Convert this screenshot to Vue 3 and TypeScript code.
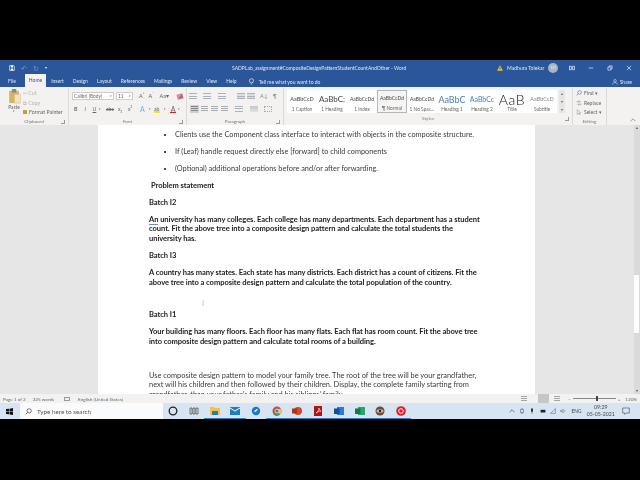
<template>
  <div class="screen">
    <header class="titlebar">
      <div class="quick">
        <svg class="qa save" viewBox="0 0 10 10"><path d="M1 1h7l1 1v7H1z" fill="none" stroke="#fff" /><path d="M3 1h4v3H3zM3 6h4v3H3z" fill="#fff" /></svg>
        <span class="qa dim">↶</span>
        <span class="qa dim">↻</span>
        <span class="qa caret">▾</span>
      </div>
      <div class="doc-title">SADPLab_assignment#CompositeDesignPatternStudentCountAndOther  -  Word</div>
      <div class="account">
        <svg class="warn" viewBox="0 0 10 10"><path d="M5 .5 9.800 9.500H.2z" fill="#f3c13a" /><path d="M4.500 3.500h1v3.200h-1zM4.500 7.300h1v1h-1z" fill="#333" /></svg>
        <span class="user">Madhura Tolekar</span>
        <span class="avatar">MT</span>
      </div>
      <div class="win-btns">
        <svg viewBox="0 0 10 10"><rect x="1" y="2" width="8" height="6" fill="none" stroke="#fff" /><path d="M3 4h4v2H3z" fill="#fff" /></svg>
        <svg viewBox="0 0 10 10"><path d="M1 5h8" stroke="#fff" /></svg>
        <svg viewBox="0 0 10 10"><path d="M1.500 3.500h5v5h-5zM3.500 3.500v-2h5v5h-2" fill="none" stroke="#fff" /></svg>
        <svg viewBox="0 0 10 10"><path d="m1.500 1.500 7 7m0-7-7 7" stroke="#fff" /></svg>
      </div>
    </header>

    <nav class="tabs">
      <span v-for="tab in tabs" :key="tab" class="tab" :class="{ active: tab === 'Home' }">{{ tab }}</span>
      <span class="tell">
        <svg viewBox="0 0 10 10"><circle cx="5" cy="4" r="3" fill="none" stroke="#fff" stroke-width=".9" /><path d="M4 8.500h2" stroke="#fff" /></svg>
        Tell me what you want to do
      </span>
      <span class="share">
        <svg viewBox="0 0 10 10"><circle cx="5" cy="3" r="2.200" fill="none" stroke="#fff" stroke-width=".8" /><path d="M1 9.500c0-5 8-5 8 0" fill="none" stroke="#fff" stroke-width=".8" /></svg>
        Share
      </span>
    </nav>

    <section class="ribbon">
      <div class="group clipboard">
        <div class="group-body clip-body">
          <div class="paste">
            <svg viewBox="0 0 14 17"><rect x="1" y="2" width="11" height="14" fill="#d9b25f" /><rect x="4" y="0" width="5" height="4" fill="#8a8a8a" /><path d="M7 6h7v10H7z" fill="#f4e3b5" stroke="#bbb" stroke-width=".5" /></svg>
            <span>Paste</span>
            <span class="tiny-caret">▾</span>
          </div>
          <div class="clip-list">
            <span class="off">✂ Cut</span>
            <span class="off">⧉ Copy</span>
            <span><i class="brush"></i>Format Painter</span>
          </div>
        </div>
        <div class="group-label">Clipboard<i class="launcher"></i></div>
      </div>

      <div class="group font">
        <div class="group-body font-body">
          <div class="tool-row">
            <span class="select family">Calibri (Body)<em>▾</em></span>
            <span class="select size">11<em>▾</em></span>
            <span class="tool big">A<sup>^</sup></span>
            <span class="tool small">A<sup>ˇ</sup></span>
            <span class="tool aa">Aa▾</span>
            <span class="tool eraser"></span>
          </div>
          <div class="marks">
            <b>B</b><i>I</i><u>U</u><em>▾</em><s>abc</s><span>x<sub>2</sub></span><span>x<sup>2</sup></span>
            <span class="effect">A</span><em>▾</em>
            <span class="highlight">ab</span><em>▾</em>
            <span class="fontcolor">A</span><em>▾</em>
          </div>
        </div>
        <div class="group-label">Font<i class="launcher"></i></div>
      </div>

      <div class="group paragraph">
        <div class="group-body para-body">
          <div class="para-row top">
            <span v-for="n in 3" :key="n" class="para-icon list"></span>
            <span class="para-icon indent"></span>
            <span class="para-icon indent"></span>
            <span class="para-glyph">A↓</span>
            <span class="para-glyph">¶</span>
          </div>
          <div class="para-row bottom">
            <span class="align on"></span>
            <span class="align"></span>
            <span class="align"></span>
            <span class="align"></span>
            <span class="para-icon spacing"></span>
            <span class="para-icon shade"></span>
            <span class="para-icon borders"></span>
          </div>
        </div>
        <div class="group-label">Paragraph<i class="launcher"></i></div>
      </div>

      <div class="group styles">
        <div class="group-body gallery-wrap">
          <div class="gallery">
            <div v-for="s in styleItems" :key="s.label" class="style-item" :class="{ selected: s.label === '¶ Normal' }">
              <span class="sample" :class="s.cls">{{ s.sample }}</span>
              <span class="style-name">{{ s.label }}</span>
            </div>
          </div>
          <div class="gallery-scroll"><span>▴</span><span>▾</span><span>▾</span></div>
        </div>
        <div class="group-label">Styles<i class="launcher"></i></div>
      </div>

      <div class="group editing">
        <div class="group-body edit-body">
          <span><svg viewBox="0 0 10 10"><circle cx="6" cy="4" r="3" fill="none" stroke="#4a6fa5" /><path d="m4 6-3 3" stroke="#4a6fa5" /></svg>Find ▾</span>
          <span><svg viewBox="0 0 10 10"><path d="M1 3h6l-2-2M9 7H3l2 2" fill="none" stroke="#777" /></svg>Replace</span>
          <span><svg viewBox="0 0 10 10"><path d="M2 1v8l2-2 1.500 2.500L7 9 5.500 6.500H8z" fill="none" stroke="#888" stroke-width=".8" /></svg>Select ▾</span>
        </div>
        <div class="group-label">Editing</div>
      </div>
      <svg class="collapse" viewBox="0 0 10 6"><path d="m1 5 4-4 4 4" fill="none" stroke="#666" /></svg>
    </section>

    <main class="workspace">
      <div class="margin-left"></div>
      <article class="page">
        <ul class="bullets">
          <li v-for="b in bullets" :key="b">{{ b }}</li>
        </ul>
        <p class="bold statement">Problem statement</p>
        <p class="bold">Batch I2</p>
        <p class="bold"><span class="squiggle">An</span> university has many colleges. Each college has many departments. Each department has a student<br />count. Fit the above tree into a composite design pattern and calculate the total students the<br />university has.</p>
        <p class="bold">Batch I3</p>
        <p class="bold">A country has many states. Each state has many districts. Each district has a count of citizens. Fit the<br />above tree into a composite design pattern and calculate the total population of the country.</p>
        <p class="bold after-country">Batch I1</p>
        <p class="bold">Your building has many floors. Each floor has many flats. Each flat has room count. Fit the above tree<br />into composite design pattern and calculate total rooms of a building.</p>
        <p class="family-task">Use composite design pattern to model your family tree. The root of the tree will be your grandfather,<br />next will his children and then followed by their children. Display, the complete family starting from<br />grandfather, than your father's family and his siblings' family.</p>
        <span class="ibeam">I</span>
      </article>
      <div class="margin-right">
        <div class="scrollbar">
          <span>▴</span>
          <i class="thumb"></i>
          <span>▾</span>
        </div>
      </div>
    </main>

    <footer class="statusbar">
      <span>Page 1 of 2</span>
      <span>325 words</span>
      <i class="proof"></i>
      <span>English (United States)</span>
      <div class="status-right">
        <i class="view"></i>
        <i class="view on"></i>
        <i class="view"></i>
        <span class="minus">−</span>
        <div class="zoom-track"><i></i></div>
        <span class="plus">+</span>
        <span class="percent">120%</span>
      </div>
    </footer>

    <div class="taskbar">
      <svg class="start" viewBox="0 0 10 10"><path d="M0 1.500 4.500 1v3.700H0zM5.200.9 10 0v4.700H5.200zM0 5.300h4.500V9L0 8.500zM5.200 5.300H10V10l-4.800-.8z" fill="#111" /></svg>
      <div class="search">
        <svg viewBox="0 0 10 10"><circle cx="6" cy="4" r="3" fill="none" stroke="#333" stroke-width=".9" /><path d="M3.800 6.200 1 9" stroke="#333" /></svg>
        Type here to search
      </div>
      <div class="apps">
        <span class="app"><svg viewBox="0 0 10 10"><circle cx="5" cy="5" r="3.800" fill="none" stroke="#222" stroke-width="1.300" /></svg></span>
        <span class="app"><svg viewBox="0 0 10 10"><path d="M1 2h2v6H1zM4 2h2v6H4zM7 2h2v6H7z" fill="none" stroke="#555" stroke-width=".8" /></svg></span>
        <span class="app run"><svg viewBox="0 0 10 10"><path d="M0 1h4l1 1h5v7H0z" fill="#f1c14c" /><path d="M2 5h6v4H2z" fill="#2a78c2" /></svg></span>
        <span class="app run"><svg viewBox="0 0 10 10"><rect y="1" width="10" height="8" fill="#1d7fc4" /><path d="m0 2 5 3 5-3" fill="none" stroke="#fff" /></svg></span>
        <span class="app"><svg viewBox="0 0 10 10"><circle cx="5" cy="5" r="4.200" fill="#1a78d0" /><path d="M3 6c1-2 2-3 4-3-1 2-2 3-4 3z" fill="#fff" /></svg></span>
        <span class="app run"><svg viewBox="0 0 10 10"><circle cx="5" cy="5" r="4.500" fill="#d8473c" /><path d="M5 5 1 8a4.500 4.500 0 0 0 7 .5z" fill="#3fa14e" /><path d="M5 5 8 8.500A4.500 4.500 0 0 0 9 3H5z" fill="#f3c13a" /><circle cx="5" cy="5" r="2" fill="#3d7fe0" stroke="#fff" stroke-width=".6" /></svg></span>
        <span class="app run"><svg viewBox="0 0 10 10"><circle cx="6" cy="5" r="4" fill="#d24726" /><rect x="0" y="2.500" width="5" height="5" fill="#a8341b" /></svg></span>
        <span class="app run"><svg viewBox="0 0 10 10"><rect x="1" width="8" height="10" fill="#b51212" /><path d="M3 7c2-1 3-3 3-5 0 2 1 3 2 3-2 0-3 1-5 2z" fill="none" stroke="#fff" stroke-width=".6" /></svg></span>
        <span class="app run"><svg viewBox="0 0 10 10"><rect x="3" y="1" width="7" height="8" fill="#2b7cd3" /><rect y="2.500" width="5.500" height="5.500" fill="#174e9c" /></svg></span>
        <span class="app run"><svg viewBox="0 0 10 10"><rect x="3" y="1" width="7" height="8" fill="#2ea36a" /><rect y="2.500" width="5.500" height="5.500" fill="#107c41" /></svg></span>
        <span class="app run"><svg viewBox="0 0 10 10"><circle cx="5" cy="5" r="4.500" fill="#5d5147" /><ellipse cx="5" cy="5" rx="3.500" ry="1.800" fill="#d9b98e" /><circle cx="5" cy="5" r="1.200" fill="#222" /></svg></span>
        <span class="app run"><svg viewBox="0 0 10 10"><circle cx="5" cy="5" r="4.800" fill="#e0202a" /><circle cx="5" cy="5" r="2.300" fill="none" stroke="#fff" stroke-width=".9" /></svg></span>
      </div>
      <div class="tray">
        <svg viewBox="0 0 10 10"><path d="m1 7 4-4 4 4" fill="none" stroke="#333" /></svg>
        <svg viewBox="0 0 10 10"><rect x="3" y="2" width="4" height="6" fill="none" stroke="#444" stroke-width=".8" /><path d="M5 0v2M5 8v2" stroke="#444" /></svg>
        <svg viewBox="0 0 10 10"><rect x="3.500" y=".5" width="3" height="6" rx="1.500" fill="#222" /><path d="M5 7v2.500" stroke="#222" /></svg>
        <svg viewBox="0 0 10 10"><rect x="1" y="3" width="8" height="4.500" fill="#222" /></svg>
        <svg viewBox="0 0 10 10"><path d="M1 9 9 1v8z" fill="none" stroke="#555" stroke-width=".8" /></svg>
        <svg viewBox="0 0 10 10"><path d="M1 4h2l2-2v6L3 6H1zM7 3c1 1 1 3 0 4" fill="none" stroke="#555" stroke-width=".8" /></svg>
        <span class="lang">ENG</span>
        <span class="clock">09:29<br />05-05-2021</span>
        <svg class="notif" viewBox="0 0 12 12"><path d="M1 1.500h10v7.500H6l-2 2V9H1z" fill="none" stroke="#333" stroke-width=".8" /></svg>
      </div>
    </div>
  </div>
</template>

<script setup lang="ts">
interface StyleItem {
  sample: string
  label: string
  cls: string
}

const tabs: string[] = ['File', 'Home', 'Insert', 'Design', 'Layout', 'References', 'Mailings', 'Review', 'View', 'Help']

const styleItems: StyleItem[] = [
  { sample: 'AaBbCcD', label: '1 Caption', cls: 'caption' },
  { sample: 'AaBbC:', label: '1 Heading', cls: 'heading' },
  { sample: 'AaBbCcDd', label: '1 Index', cls: '' },
  { sample: 'AaBbCcDd', label: '¶ Normal', cls: '' },
  { sample: 'AaBbCcDd', label: '1 No Spac...', cls: '' },
  { sample: 'AaBbC', label: 'Heading 1', cls: 'h1' },
  { sample: 'AaBbCc', label: 'Heading 2', cls: 'h2' },
  { sample: 'AaB', label: 'Title', cls: 'title' },
  { sample: 'AaBbCcD', label: 'Subtitle', cls: 'subtitle' }
]

const bullets: string[] = [
  'Clients use the Component class interface to interact with objects in the composite structure.',
  'If (Leaf) handle request directly else [forward] to child components',
  '(Optional) additional operations before and/or after forwarding.'
]
</script>

<style>
html,
body {
  margin: 0;
  background: #000;
}
</style>

<style scoped>
.screen {
  width: 640px;
  height: 480px;
  padding: 60px 0;
  box-sizing: border-box;
  background: #000;
  display: flex;
  flex-direction: column;
  overflow: hidden;
  font-family: Lato, "Liberation Sans", sans-serif;
  color: #333;
  filter: blur(0.3px);
}

.titlebar {
  height: 16px;
  flex: none;
  background: #2b579a;
  color: #dfe7f3;
  display: flex;
  align-items: center;
  position: relative;
}

.quick {
  display: flex;
  align-items: center;
  gap: 6px;
  padding-left: 9px;
  width: 232px;
  box-sizing: border-box;
}

.qa {
  font-size: 7px;
  line-height: 8px;
}

.qa.save {
  width: 6px;
  height: 6px;
}

.qa.dim {
  color: #7f9cc6;
}

.qa.caret {
  font-size: 4px;
}

.doc-title {
  width: 265px;
  white-space: pre;
  font-size: 5px;
}

.account {
  display: flex;
  align-items: center;
  gap: 4px;
  font-size: 5.100px;
}

.warn {
  width: 6px;
  height: 6px;
}

.avatar {
  width: 10px;
  height: 10px;
  border-radius: 50%;
  background: #a9b4c4;
  font-size: 3.500px;
  display: flex;
  align-items: center;
  justify-content: center;
  color: #eee;
}

.win-btns {
  display: flex;
  gap: 13px;
  margin-left: 11px;
}

.win-btns svg {
  width: 6px;
  height: 6px;
}

.tabs {
  height: 11px;
  flex: none;
  background: #2b579a;
  color: #dfe7f3;
  display: flex;
  align-items: flex-end;
  font-size: 5px;
  padding-left: 8px;
  position: relative;
}

.tab {
  height: 11px;
  line-height: 10px;
  margin-right: 9px;
}

.tab.active {
  background: #f3f2f1;
  color: #2b579a;
  height: 13px;
  line-height: 13px;
  padding: 0 4px;
  margin-right: 5px;
}

.tell {
  display: flex;
  align-items: center;
  gap: 4px;
  height: 11px;
  margin-left: 2px;
}

.tell svg {
  width: 7px;
  height: 7px;
}

.share {
  margin-left: auto;
  margin-right: 8px;
  display: flex;
  align-items: center;
  gap: 2px;
  height: 11px;
}

.share svg {
  width: 6px;
  height: 6px;
}

.ribbon {
  height: 38px;
  flex: none;
  background: #f3f2f1;
  display: flex;
  font-size: 5.400px;
  color: #666;
  position: relative;
}

.group {
  box-sizing: border-box;
  border-right: 1px solid #dcdad8;
  display: flex;
  flex-direction: column;
  margin-top: 1px;
}

.group-body {
  flex: 1;
  min-height: 0;
}

.group-label {
  height: 8px;
  line-height: 8px;
  font-size: 4.600px;
  color: #777;
  text-align: center;
  position: relative;
}

.launcher {
  position: absolute;
  right: 3px;
  top: 3px;
  width: 3px;
  height: 3px;
  border-right: 1px solid #999;
  border-bottom: 1px solid #999;
}

.clipboard {
  width: 69px;
}

.clip-body {
  display: flex;
  padding: 1px 0 0 6px;
}

.paste {
  width: 16px;
  display: flex;
  flex-direction: column;
  align-items: center;
  font-size: 4.800px;
  line-height: 6px;
}

.paste svg {
  width: 13px;
  height: 15px;
}

.tiny-caret {
  font-size: 3px;
  line-height: 3px;
}

.clip-list {
  display: flex;
  flex-direction: column;
  gap: 1.500px;
  padding-left: 1px;
  line-height: 8px;
  font-size: 5.200px;
  white-space: nowrap;
}

.clip-list .off {
  color: #b4b2b0;
}

.brush {
  display: inline-block;
  width: 4px;
  height: 4px;
  margin-right: 2px;
  background: #c89b3c;
}

.font {
  width: 118px;
}

.font-body {
  padding: 4px 0 0 3px;
  display: flex;
  flex-direction: column;
  gap: 5px;
}

.tool-row {
  display: flex;
  align-items: center;
  height: 8px;
  gap: 4px;
}

.select {
  height: 8px;
  line-height: 7px;
  box-sizing: border-box;
  border: 1px solid #d0cecc;
  background: #fff;
  padding-left: 1px;
  display: flex;
  justify-content: space-between;
  font-size: 4.800px;
  white-space: nowrap;
}

.select em {
  font-style: normal;
  font-size: 3px;
  padding-right: 1px;
}

.family {
  width: 42px;
  margin-right: -2px;
}

.size {
  width: 17px;
}

.tool {
  font-size: 5.500px;
}

.big {
  margin-left: 2px;
}

.aa {
  margin-left: 2px;
}

.eraser {
  width: 6px;
  height: 5px;
  margin-left: 4px;
  background: linear-gradient(135deg, #d98aa0 50%, #b9667e 50%);
  transform: rotate(-15deg);
}

.marks {
  display: grid;
  grid-template-columns: 10.500px 8px 6.500px 7px 12px 10px 12px 9px 5px 10px 6px 8px 6px;
  align-items: center;
  height: 8px;
  padding-left: 2px;
  font-size: 5.200px;
  line-height: 8px;
}

.marks em {
  font-style: normal;
  font-size: 3px;
}

.marks sub,
.marks sup,
.big sup,
.small sup {
  font-size: 3px;
  line-height: 0;
}

.effect {
  color: #7ea6d8;
  font-size: 7px;
}

.highlight {
  background: linear-gradient(#f3f2f1 70%, #f4e421 70%);
  width: 6px;
  overflow: hidden;
}

.fontcolor {
  font-size: 7px;
  line-height: 6px;
  width: 6px;
  text-align: center;
  border-bottom: 1.500px solid #d3222a;
}

.paragraph {
  width: 97px;
}

.para-body {
  padding-top: 4px;
  display: flex;
  flex-direction: column;
  gap: 5px;
}

.para-row {
  display: grid;
  align-items: center;
  height: 8px;
  font-size: 5.500px;
  color: #888;
}

.para-row.top {
  padding-left: 2px;
  grid-template-columns: 14px 15px 19px 10px 13px 13px 6px;
}

.para-row.bottom {
  padding-left: 4px;
  grid-template-columns: 10px 10px 10px 14px 15px 14px 8px;
}

.para-icon {
  width: 8px;
  height: 6px;
  background: repeating-linear-gradient(#a9b2be 0 1px, transparent 1px 2.500px);
}

.para-icon.list {
  width: 8px;
}

.para-icon.indent {
  background-color: #d9dde4;
}

.para-icon.shade {
  background: linear-gradient(#c5c5c5, #e2e2e2);
}

.para-icon.borders {
  background: none;
  border: 1px dotted #aaa;
  box-sizing: border-box;
}

.para-glyph {
  white-space: nowrap;
  line-height: 8px;
}

.align {
  width: 7px;
  height: 6px;
  background: repeating-linear-gradient(#a8adb4 0 1px, transparent 1px 2px);
}

.align.on {
  background: repeating-linear-gradient(#85898f 0 1px, #d2d0ce 1px 2px);
  outline: 1.500px solid #d2d0ce;
}

.styles {
  width: 289px;
}

.gallery-wrap {
  display: flex;
  padding: 2px 0 0 3px;
  height: 26px;
  flex: none;
  box-sizing: border-box;
}

.gallery {
  background: #fff;
  display: grid;
  grid-template-columns: repeat(9, 30px);
  width: 270px;
  height: 23px;
}

.style-item {
  box-sizing: border-box;
  display: flex;
  flex-direction: column;
  align-items: center;
  justify-content: flex-end;
  overflow: hidden;
  white-space: nowrap;
  height: 23px;
}

.style-item.selected {
  border: 1px solid #b8b6b4;
  background: #f6f5f4;
}

.sample {
  font-size: 5px;
  color: #444;
  line-height: 11px;
}

.sample.caption,
.sample.subtitle {
  font-size: 5.500px;
}

.sample.subtitle {
  color: #888;
}

.sample.heading {
  font-size: 8px;
}

.sample.h1 {
  font-size: 9px;
  color: #4c7fb8;
}

.sample.h2 {
  font-size: 7px;
  color: #4c7fb8;
}

.sample.title {
  font-size: 14px;
  font-weight: 300;
  letter-spacing: 0.6px;
  color: #111;
}

.style-name {
  font-size: 4.800px;
  line-height: 8px;
  color: #666;
}

.gallery-scroll {
  width: 6px;
  height: 23px;
  margin-left: 2px;
  display: flex;
  flex-direction: column;
  justify-content: space-between;
  align-items: center;
  background: #e6e5e4;
  font-size: 4px;
  line-height: 7px;
}

.editing {
  width: 34px;
}

.edit-body {
  display: flex;
  flex-direction: column;
  gap: 1.500px;
  padding: 1px 0 0 3px;
  font-size: 5px;
  line-height: 8px;
  white-space: nowrap;
}

.edit-body svg {
  width: 6px;
  height: 6px;
  margin-right: 2px;
  vertical-align: -1px;
}

.collapse {
  position: absolute;
  right: 4px;
  bottom: 3px;
  width: 6px;
  height: 4px;
}

.workspace {
  height: 269px;
  flex: none;
  display: flex;
  background: #e6e6e6;
  overflow: hidden;
}

.margin-left {
  width: 98px;
  flex: none;
}

.page {
  width: 437px;
  flex: none;
  box-sizing: border-box;
  background: #fff;
  padding: 5.200px 0 0 51px;
  font-size: 7.330px;
  line-height: 9.700px;
  color: #3a3a3a;
  position: relative;
}

.bullets {
  margin: 0 0 7.200px;
  padding: 0 0 0 26px;
}

.bullets li {
  margin-bottom: 7.200px;
  white-space: nowrap;
}

.bullets li::marker {
  font-size: 7px;
  color: #111;
}

.page p {
  margin: 0 0 7.200px;
  white-space: nowrap;
}

.page p.bold {
  font-size: 7.550px;
  font-weight: 700;
  color: #222;
  letter-spacing: -0.06px;
}

.page p.statement {
  padding-left: 2px;
}

.page p.after-country {
  margin-top: 22.700px;
}

.page p.family-task {
  margin-top: 24.500px;
  font-size: 7.420px;
}

.squiggle {
  border-bottom: 1px solid #6c8ebf;
}

.ibeam {
  position: absolute;
  left: 104px;
  top: 174px;
  color: #888;
  font-weight: 300;
  font-size: 8px;
}

.margin-right {
  flex: 1;
  display: flex;
  justify-content: flex-end;
}

.scrollbar {
  width: 6px;
  background: #dadada;
  display: flex;
  flex-direction: column;
  align-items: center;
  font-size: 4px;
  line-height: 6px;
  color: #555;
  position: relative;
}

.thumb {
  position: absolute;
  left: 0;
  top: 150px;
  width: 5px;
  height: 58px;
  background: #fff;
}

.scrollbar span:last-child {
  margin-top: auto;
}

.statusbar {
  height: 9px;
  flex: none;
  background: #f3f2f1;
  display: flex;
  align-items: center;
  gap: 7px;
  padding: 0 3px;
  font-size: 4.600px;
  color: #666;
}

.proof {
  width: 6px;
  height: 4px;
  border: 1px solid #999;
  box-sizing: border-box;
  margin: 0 1px 0 3px;
}

.status-right {
  margin-left: auto;
  display: flex;
  align-items: center;
}

.view {
  width: 6px;
  height: 5px;
  background: repeating-linear-gradient(#a8a6a4 0 1px, transparent 1px 2px);
}

.view:first-child {
  margin-right: 11px;
}

.view.on {
  width: 11px;
  height: 9px;
  margin-right: 5px;
  background: #c8c6c4;
}

.minus {
  margin-left: 8px;
}

.zoom-track {
  width: 43px;
  height: 1px;
  background: #888;
  position: relative;
  margin-left: 2px;
}

.zoom-track i {
  position: absolute;
  left: 23px;
  top: -2px;
  width: 2px;
  height: 5px;
  background: #444;
}

.plus {
  margin-left: 2px;
}

.percent {
  margin-left: 5px;
}

.taskbar {
  height: 16px;
  flex: none;
  background: #d7e4f2;
  display: flex;
  align-items: center;
  position: relative;
}

.start {
  width: 7px;
  height: 7px;
  margin: 0 7px 0 6px;
}

.search {
  width: 143px;
  height: 16px;
  flex: none;
  box-sizing: border-box;
  background: #fafbfc;
  display: flex;
  align-items: center;
  gap: 5px;
  padding-left: 5px;
  font-size: 6.300px;
  color: #555;
}

.search svg {
  width: 7px;
  height: 7px;
}

.apps {
  display: flex;
}

.app {
  width: 20.700px;
  height: 16px;
  box-sizing: border-box;
  display: flex;
  align-items: center;
  justify-content: center;
}

.app svg {
  width: 10px;
  height: 10px;
}

.app.run {
  border-bottom: 1px solid #2f7fc4;
}

.tray {
  margin-left: auto;
  display: flex;
  align-items: center;
  gap: 4.300px;
  padding-right: 10px;
}

.tray svg {
  width: 6px;
  height: 6px;
}

.lang {
  font-size: 4.800px;
  color: #444;
  margin-left: 1px;
}

.clock {
  font-size: 5.200px;
  line-height: 7px;
  color: #444;
  text-align: center;
  margin: 0 3px 0 1px;
}

.tray svg.notif {
  width: 8px;
  height: 8px;
}
</style>
